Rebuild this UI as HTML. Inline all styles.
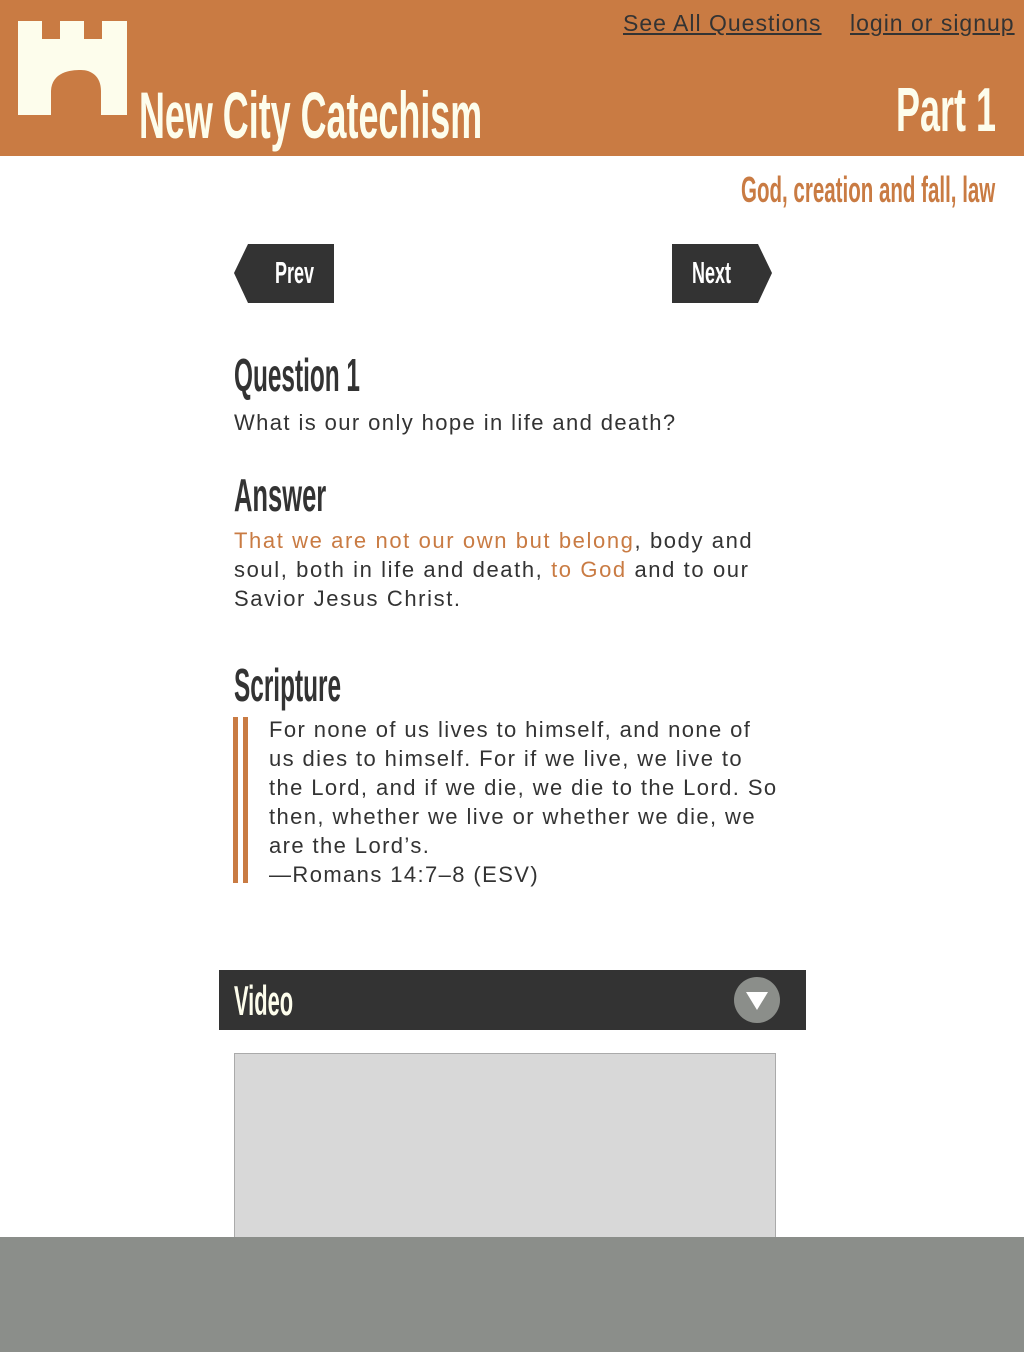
<!DOCTYPE html>
<html><head><meta charset="utf-8"><style>
*{margin:0;padding:0;box-sizing:border-box}
body{width:1024px;height:1352px;background:#fff;font-family:"Liberation Sans",sans-serif;color:#333;position:relative;overflow:hidden}
.c{position:absolute;font-family:"Liberation Sans",sans-serif;font-weight:bold;transform-origin:0 0;white-space:nowrap;line-height:1}
header{position:absolute;left:0;top:0;width:1024px;height:156px;background:#c97b43}
.nav{position:absolute;top:10px;font-size:23px;color:#333;text-decoration:underline;white-space:nowrap;letter-spacing:1px}
.p{position:absolute;left:234px;font-size:22px;line-height:29px;white-space:nowrap;letter-spacing:1.4px}
.o{color:#c97b43}
</style></head><body>
<header>
<svg style="position:absolute;left:18px;top:21px" width="110" height="95" viewBox="0 0 110 95"><path d="M0 0H24V18H42V0H66V18H84V0H109V94H83V70C83 55 73 49 63 49C52 49 34 51 33 70V94H0Z" fill="#fdfdec"/></svg>
<div class="c" style="left:139px;top:82px;font-size:66px;color:#fdfdec;transform:scaleX(.544)">New City Catechism</div>
<a class="nav" style="left:623px">See All Questions</a>
<a class="nav" style="left:850px">login or signup</a>
<div class="c" style="left:896px;top:80px;font-size:62px;color:#fdfdec;transform:scaleX(.58)">Part 1</div>
</header>
<div class="c" style="left:741px;top:172px;font-size:36px;color:#c97b43;transform:scaleX(.57)">God, creation and fall, law</div>
<svg style="position:absolute;left:234px;top:244px" width="100" height="59"><path d="M14 0H100V59H14L0 29Z" fill="#333"/></svg>
<div class="c" style="left:275px;top:257px;font-size:31px;color:#fff;transform:scaleX(.58)">Prev</div>
<svg style="position:absolute;left:672px;top:244px" width="100" height="59"><path d="M0 0H86L100 29L86 59H0Z" fill="#333"/></svg>
<div class="c" style="left:692px;top:257px;font-size:31px;color:#fff;transform:scaleX(.58)">Next</div>
<div class="c" style="left:234px;top:352px;font-size:46px;color:#333;transform:scaleX(.53)">Question 1</div>
<div class="p" style="top:408px">What is our only hope in life and death?</div>
<div class="c" style="left:234px;top:472px;font-size:46px;color:#333;transform:scaleX(.555)">Answer</div>
<div class="p" style="top:526px;letter-spacing:1.6px"><span class="o">That we are not our own but belong</span>, body and<br>soul, both in life and death, <span class="o">to God</span> and to our<br>Savior Jesus Christ.</div>
<div class="c" style="left:234px;top:662px;font-size:46px;color:#333;transform:scaleX(.53)">Scripture</div>
<div style="position:absolute;left:233px;top:717px;width:5px;height:166px;background:#c97b43"></div>
<div style="position:absolute;left:243px;top:717px;width:5px;height:166px;background:#c97b43"></div>
<div class="p" style="left:269px;top:715px">For none of us lives to himself, and none of<br>us dies to himself. For if we live, we live to<br>the Lord, and if we die, we die to the Lord. So<br>then, whether we live or whether we die, we<br>are the Lord’s.<br>—Romans 14:7–8 (ESV)</div>
<div style="position:absolute;left:219px;top:970px;width:587px;height:60px;background:#333"></div>
<div class="c" style="left:234px;top:980px;font-size:42px;color:#fdfdec;transform:scaleX(.52)">Video</div>
<div style="position:absolute;left:734px;top:977px;width:46px;height:46px;border-radius:50%;background:#8b8e8a"></div>
<svg style="position:absolute;left:746px;top:992px" width="22" height="18"><path d="M0 0H22L11 18Z" fill="#fff"/></svg>
<div style="position:absolute;left:234px;top:1053px;width:542px;height:200px;background:#d8d8d8;border:1px solid #aaa"></div>
<div style="position:absolute;left:0;top:1237px;width:1024px;height:115px;background:#8b8e8a"></div>
</body></html>
